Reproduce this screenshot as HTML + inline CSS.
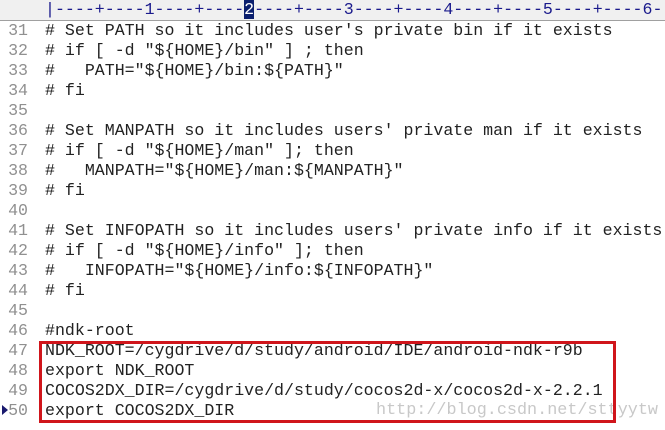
<!DOCTYPE html>
<html><head><meta charset="utf-8"><style>
body{margin:0;width:665px;height:430px;background:#fff;overflow:hidden;position:relative;font-family:"Liberation Mono",monospace;font-size:16.6px}
.ruler{position:absolute;left:0;top:0;width:665px;height:20px;background:#f0f0f0;border-bottom:1px solid #a0a0a0}
.rt{position:absolute;left:45px;top:1px;color:#1a1a8c;white-space:pre;line-height:18px}
.rt b{font-weight:normal;background:#0a1f6e;color:#fff}
.ln{position:absolute;left:0;width:28px;text-align:right;color:#909090;white-space:pre;height:20px;line-height:20px}
.tx{position:absolute;left:45px;white-space:pre;color:#222;height:20px;line-height:20px}
.box{position:absolute;left:39px;top:341px;width:571px;height:76px;border:3px solid #d0151b}
.wm{position:absolute;left:376px;top:401px;font-size:16.8px;color:#c8c8c8;white-space:pre;line-height:20px}
.mk{position:absolute;left:2px;top:405px;width:0;height:0;border-top:5px solid transparent;border-bottom:5px solid transparent;border-left:6px solid #1a1a6e}
</style></head><body>
<div class="ruler"><div class="rt">|----+----1----+----<b>2</b>----+----3----+----4----+----5----+----6--</div></div>
<div class="ln" style="top:21px">31</div><div class="tx" style="top:21px"># Set PATH so it includes user's private bin if it exists</div>
<div class="ln" style="top:41px">32</div><div class="tx" style="top:41px"># if [ -d "${HOME}/bin" ] ; then</div>
<div class="ln" style="top:61px">33</div><div class="tx" style="top:61px">#   PATH="${HOME}/bin:${PATH}"</div>
<div class="ln" style="top:81px">34</div><div class="tx" style="top:81px"># fi</div>
<div class="ln" style="top:101px">35</div>
<div class="ln" style="top:121px">36</div><div class="tx" style="top:121px"># Set MANPATH so it includes users' private man if it exists</div>
<div class="ln" style="top:141px">37</div><div class="tx" style="top:141px"># if [ -d "${HOME}/man" ]; then</div>
<div class="ln" style="top:161px">38</div><div class="tx" style="top:161px">#   MANPATH="${HOME}/man:${MANPATH}"</div>
<div class="ln" style="top:181px">39</div><div class="tx" style="top:181px"># fi</div>
<div class="ln" style="top:201px">40</div>
<div class="ln" style="top:221px">41</div><div class="tx" style="top:221px"># Set INFOPATH so it includes users' private info if it exists</div>
<div class="ln" style="top:241px">42</div><div class="tx" style="top:241px"># if [ -d "${HOME}/info" ]; then</div>
<div class="ln" style="top:261px">43</div><div class="tx" style="top:261px">#   INFOPATH="${HOME}/info:${INFOPATH}"</div>
<div class="ln" style="top:281px">44</div><div class="tx" style="top:281px"># fi</div>
<div class="ln" style="top:301px">45</div>
<div class="ln" style="top:321px">46</div><div class="tx" style="top:321px">#ndk-root</div>
<div class="ln" style="top:341px">47</div><div class="tx" style="top:341px">NDK_ROOT=/cygdrive/d/study/android/IDE/android-ndk-r9b</div>
<div class="ln" style="top:361px">48</div><div class="tx" style="top:361px">export NDK_ROOT</div>
<div class="ln" style="top:381px">49</div><div class="tx" style="top:381px">COCOS2DX_DIR=/cygdrive/d/study/cocos2d-x/cocos2d-x-2.2.1</div>
<div class="ln" style="top:401px">50</div><div class="tx" style="top:401px">export COCOS2DX_DIR</div>
<div class="mk"></div>
<div class="wm">http://blog.csdn.net/sttyytw</div>
<div class="box"></div>
</body></html>
